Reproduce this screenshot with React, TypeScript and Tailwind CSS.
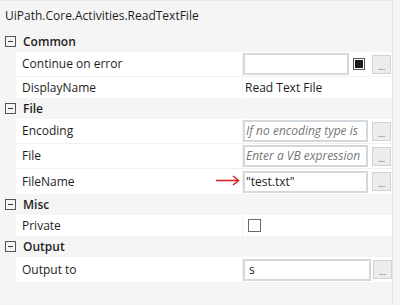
import React from "react";

const font = { fontFamily: '"Open Sans", "Noto Sans", sans-serif' };

function Minus() {
  return (
    <div className="w-[11px] h-[11px] border border-[#555] flex items-center justify-center bg-transparent mr-[7px]">
      <div className="w-[5px] h-px bg-[#333]" />
    </div>
  );
}

function Header({ title }: { title: string }) {
  return (
    <div className="h-[21px] flex items-center pl-[5px]">
      <Minus />
      <span className="text-[12px] font-semibold text-[#1e1e1e]">{title}</span>
    </div>
  );
}

function Dots() {
  return (
    <div className="w-[19px] h-[19px] bg-[#ececec] border border-[#d2d2d2] flex items-end justify-center text-[9px] leading-[12px] text-[#555] shrink-0">
      ...
    </div>
  );
}

function TextBox({ w, children, italic }: { w: string; children?: React.ReactNode; italic?: boolean }) {
  return (
    <div
      className={`${w} h-[22px] border-2 border-[#d3d8dc] bg-white flex items-center pl-[1px] overflow-hidden whitespace-nowrap text-[12px] ${
        italic ? "italic text-[#777]" : "text-[#1e1e1e]"
      }`}
    >
      {children}
    </div>
  );
}

function Row({
  label,
  h,
  children,
  last,
  arrow,
}: {
  label: string;
  h: string;
  children?: React.ReactNode;
  last?: boolean;
  arrow?: boolean;
}) {
  return (
    <div className={`ml-[16px] bg-white flex ${h} ${last ? "" : "border-b border-[#f0f0f0]"}`}>
      <div className="w-[226px] pl-[6px] flex items-center text-[12px] text-[#1e1e1e] relative">
        {label}
        {arrow && (
          <svg className="absolute right-[2px] top-[6px]" width="24" height="11" viewBox="0 0 24 11">
            <line x1="0" y1="5.5" x2="22" y2="5.5" stroke="#d42424" strokeWidth="1.6" />
            <polyline points="17,1 22.5,5.5 17,10" fill="none" stroke="#d42424" strokeWidth="1.6" />
          </svg>
        )}
      </div>
      <div className="flex-1 flex items-center border-l border-[#f2f2f2]">{children}</div>
    </div>
  );
}

export default function App() {
  return (
    <div className="relative w-[400px] h-[305px] bg-[#f5f5f5] overflow-hidden" style={font}>
      <div className="w-[393px] h-[305px] border-r border-[#e3e3e3] border-t border-t-[#e6e6e6] flex flex-col">
        <div className="h-[30px] flex items-center pl-[5px] text-[12px] text-[#1e1e1e]">
          UiPath.Core.Activities.ReadTextFile
        </div>
        <Header title="Common" />
        <Row label="Continue on error" h="h-[25px]">
          <TextBox w="w-[106px]" />
          <div className="ml-[4px] w-[12px] h-[12px] border border-[#555] bg-white flex items-center justify-center">
            <div className="w-[8px] h-[8px] bg-[#1a1a1a]" />
          </div>
          <div className="ml-[7px]">
            <Dots />
          </div>
        </Row>
        <Row label="DisplayName" h="h-[21px]" last>
          <span className="pl-[2px] text-[12px] text-[#1e1e1e]">Read Text File</span>
        </Row>
        <Header title="File" />
        <Row label="Encoding" h="h-[25px]">
          <TextBox w="w-[125px]" italic>
            If no encoding type is
          </TextBox>
          <div className="ml-[4px]">
            <Dots />
          </div>
        </Row>
        <Row label="File" h="h-[25px]">
          <TextBox w="w-[125px]" italic>
            Enter a VB expression
          </TextBox>
          <div className="ml-[4px]">
            <Dots />
          </div>
        </Row>
        <Row label="FileName" h="h-[25px]" last arrow>
          <TextBox w="w-[125px]">"test.txt"</TextBox>
          <div className="ml-[4px]">
            <Dots />
          </div>
        </Row>
        <Header title="Misc" />
        <Row label="Private" h="h-[21px]" last>
          <div className="ml-[5px] w-[13px] h-[13px] border border-[#6a6a6a] bg-white" />
        </Row>
        <Header title="Output" />
        <Row label="Output to" h="h-[25px]" last>
          <TextBox w="w-[128px]">
            <span className="pl-[3px]">s</span>
          </TextBox>
          <div className="ml-[2px]">
            <Dots />
          </div>
        </Row>
      </div>
    </div>
  );
}
